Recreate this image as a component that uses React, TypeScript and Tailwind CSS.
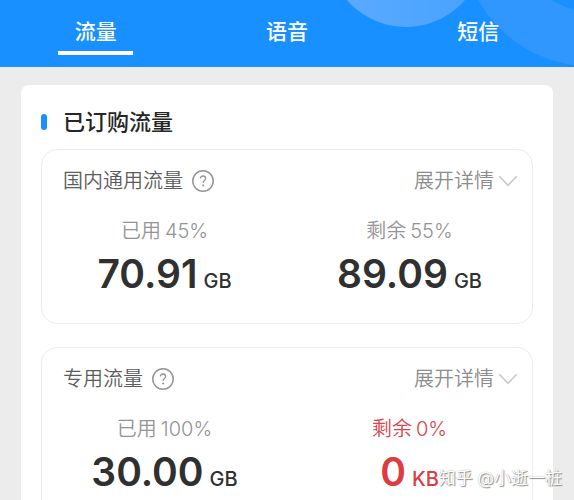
import React, { useState } from 'react';
import { clsx } from 'clsx';

interface Amount {
    label: string;
    percent: string;
    value: string;
    unit: string;
    alert?: boolean;
}

interface DataPlan {
    id: string;
    name: string;
    amounts: Amount[];
}

const TABS = ['流量', '语音', '短信'];

const PLANS: DataPlan[] = [
    {
        id: 'general',
        name: '国内通用流量',
        amounts: [
            { label: '已用', percent: '45%', value: '70.91', unit: 'GB' },
            { label: '剩余', percent: '55%', value: '89.09', unit: 'GB' },
        ],
    },
    {
        id: 'special',
        name: '专用流量',
        amounts: [
            { label: '已用', percent: '100%', value: '30.00', unit: 'GB' },
            { label: '剩余', percent: '0%', value: '0', unit: 'KB', alert: true },
        ],
    },
];

function HeaderCircles() {
    return (
        <svg className="absolute top-0 right-0" width="240" height="67" viewBox="334 0 240 67" aria-hidden="true">
            <defs>
                <linearGradient id="disc" x1="0" y1="0" x2="1" y2="0">
                    <stop offset="0" stopColor="#5cabff" />
                    <stop offset="1" stopColor="#47a2ff" />
                </linearGradient>
            </defs>
            <circle cx="406" cy="-51" r="78" fill="url(#disc)" />
            <circle cx="592" cy="-64" r="103" fill="none" stroke="#3097ff" strokeWidth="55" />
        </svg>
    );
}

function HelpIcon() {
    return (
        <svg width="24" height="24" viewBox="0 0 24 24" fill="none" stroke="#949494" aria-hidden="true">
            <circle cx="12" cy="12" r="10.2" strokeWidth="1.5" />
            <path d="M9.4 9.6C9.4 7.9 10.4 7 12 7s2.6 1 2.6 2.4c0 1.9-2.5 2.2-2.5 4.7" strokeWidth="1.3" />
            <circle cx="12.1" cy="16.6" r="1" fill="#949494" stroke="none" />
        </svg>
    );
}

function Chevron() {
    return (
        <svg width="20" height="12" viewBox="0 0 20 12" fill="none" stroke="#c8c8c8" strokeWidth="1.6" aria-hidden="true">
            <path d="M1.3 1.2 10 10.3l8.7-9.1" />
        </svg>
    );
}

function PlanCard({ plan }: { plan: DataPlan }) {
    return (
        <section className="rounded-2xl border border-[#ededed] pt-[17px] pb-[22px]">
            <div className="flex items-center justify-between pr-3.5 pl-[21px]">
                <div className="flex items-center gap-2">
                    <h3 className="text-xl leading-7 font-[350] text-[#5c5c5c]">{plan.name}</h3>
                    <button type="button" aria-label={`${plan.name}说明`}>
                        <HelpIcon />
                    </button>
                </div>
                <button type="button" className="flex items-center gap-1 text-xl leading-7 font-[350] text-[#8c8c8c]">
                    展开详情
                    <Chevron />
                </button>
            </div>

            <div className="mt-5 grid grid-cols-2">
                {plan.amounts.map(amount => (
                    <div key={amount.label} className="flex flex-col items-center">
                        <p className={clsx('flex gap-1 text-xl leading-8 font-[350]', amount.alert ? 'text-[#d9464b]' : 'text-[#949494]')}>
                            <span>{amount.label}</span>
                            <span>{amount.percent}</span>
                        </p>
                        <p className={clsx('flex items-baseline gap-1.5 leading-[54px] font-semibold', amount.alert ? 'text-[#dc3c42]' : 'text-[#303030]')}>
                            <span className="text-[39px]">{amount.value}</span>
                            <span className="text-xl font-medium">{amount.unit}</span>
                        </p>
                    </div>
                ))}
            </div>
        </section>
    );
}

export default function App() {
    const [active, setActive] = useState(TABS[0]);

    return (
        <div className="relative h-screen overflow-hidden bg-[#ececec] font-['Inter','Noto_Sans_CJK_SC',sans-serif]">
            <header className="relative overflow-hidden bg-[#1890ff]">
                <HeaderCircles />
                <nav className="relative grid grid-cols-3 pt-4 pb-3">
                    {TABS.map(tab => (
                        <button
                            key={tab}
                            type="button"
                            onClick={() => setActive(tab)}
                            className="flex flex-col items-center gap-[3px] text-[21px] leading-8 font-medium text-white"
                        >
                            {tab}
                            <span className={clsx('h-1 w-[75px]', tab === active && 'bg-white')} />
                        </button>
                    ))}
                </nav>
            </header>

            <main className="mx-[21px] mt-[18px] rounded-lg bg-white px-5 py-[21px]">
                <div className="flex items-center gap-4">
                    <span className="h-4 w-1.5 rounded-full bg-[#1890ff]" />
                    <h2 className="text-[22px] leading-8 font-medium text-[#262626]">已订购流量</h2>
                </div>
                <div className="mt-[11px] flex flex-col gap-[23px]">
                    {PLANS.map(plan => (
                        <PlanCard key={plan.id} plan={plan} />
                    ))}
                </div>
            </main>

            <div className="pointer-events-none absolute right-3 bottom-2 text-[17px] leading-7 text-white [text-shadow:1px_1px_1px_#8c8c8c,0_0_1px_#a6a6a6]">
                知乎 @小逝一桩
            </div>
        </div>
    );
}
